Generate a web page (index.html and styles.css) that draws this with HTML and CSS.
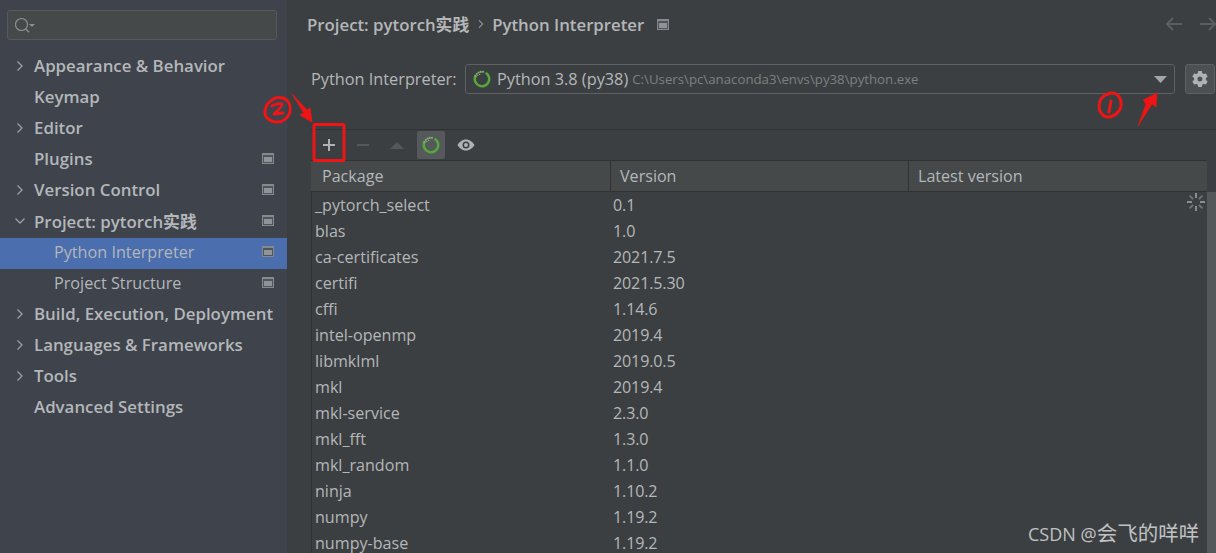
FILE: index.html
```html
<!DOCTYPE html>
<html lang="en">
<head>
<meta charset="utf-8">
<title>Settings</title>
<link rel="stylesheet" href="styles.css">
</head>
<body>
<svg width="0" height="0" class="defs"><defs>
  <symbol id="proj" viewBox="0 0 12 11"><path d="M0 0h12v11H0z" fill="#858a8f"/><path d="M1 2h10v8H1z" fill="#50555b"/><path d="M2 4h8v5H2z" fill="#8f9498"/></symbol>
  <symbol id="chev" viewBox="0 0 10 12"><path d="M2.500 1.500 7 6l-4.500 4.500" fill="none" stroke="currentColor" stroke-width="1.300"/></symbol>
  <symbol id="ring" viewBox="0 0 18 18"><circle cx="9" cy="9" r="7.200" fill="none" stroke="#57a83b" stroke-width="2.500" stroke-dasharray="34 12" transform="rotate(-60 9 9)"/><g fill="#7fae6e"><circle cx="2.500" cy="6" r="1.100"/><circle cx="3.800" cy="4" r="1.100"/><circle cx="5.600" cy="2.600" r="1.100"/><circle cx="7.700" cy="1.900" r="1.100"/><circle cx="10" cy="1.800" r="1.100"/><circle cx="4.800" cy="5.600" r=".7"/><circle cx="6.600" cy="4.400" r=".7"/></g></symbol>
</defs></svg>
<div class="app">
  <aside class="side">
    <div class="search">
      <svg class="search-ico" width="22" height="18" viewBox="0 0 22 18"><circle cx="6.500" cy="7.500" r="6" fill="none" stroke="#8c9093" stroke-width="1.200"/><path d="m10.800 12 3.200 3.200" stroke="#8c9093" stroke-width="1.400"/><path d="M14 7h6l-3 3z" fill="#8c9093"/></svg>
    </div>
    <nav class="tree">
      <div class="row b"><svg class="chev"><use href="#chev"/></svg><span>Appearance &amp; Behavior</span></div>
      <div class="row b"><i class="nochev"></i><span>Keymap</span></div>
      <div class="row b"><svg class="chev"><use href="#chev"/></svg><span>Editor</span></div>
      <div class="row b"><i class="nochev"></i><span>Plugins</span><svg class="proj"><use href="#proj"/></svg></div>
      <div class="row b"><svg class="chev"><use href="#chev"/></svg><span>Version Control</span><svg class="proj"><use href="#proj"/></svg></div>
      <div class="row b"><svg class="chev open"><use href="#chev"/></svg><span>Project: pytorch实践</span><svg class="proj"><use href="#proj"/></svg></div>
      <div class="row sub sel"><span>Python Interpreter</span><svg class="proj"><use href="#proj"/></svg></div>
      <div class="row sub"><span>Project Structure</span><svg class="proj"><use href="#proj"/></svg></div>
      <div class="row b"><svg class="chev"><use href="#chev"/></svg><span>Build, Execution, Deployment</span></div>
      <div class="row b"><svg class="chev"><use href="#chev"/></svg><span>Languages &amp; Frameworks</span></div>
      <div class="row b"><svg class="chev"><use href="#chev"/></svg><span>Tools</span></div>
      <div class="row b"><i class="nochev"></i><span>Advanced Settings</span></div>
    </nav>
  </aside>
  <main class="main">
    <header class="crumbs">
      <span>Project: pytorch实践</span>
      <svg class="crumb-sep"><use href="#chev"/></svg>
      <span>Python Interpreter</span>
      <svg class="proj crumb-proj"><use href="#proj"/></svg>
      <div class="nav-arrows">
        <svg width="18" height="14" viewBox="0 0 18 14"><path d="M17 7H2M8 1 2 7l6 6" fill="none" stroke="#5b5f61" stroke-width="2"/></svg>
        <svg width="18" height="14" viewBox="0 0 18 14"><path d="M1 7h15M10 1l6 6-6 6" fill="none" stroke="#5b5f61" stroke-width="2"/></svg>
      </div>
    </header>
    <div class="interp">
      <label>Python Interpreter:</label>
      <div class="combo">
        <svg class="ring"><use href="#ring"/></svg>
        <span class="combo-name">Python 3.8 (py38)</span>
        <span class="combo-path">C:\Users\pc\anaconda3\envs\py38\python.exe</span>
        <svg class="combo-arrow" width="13" height="7" viewBox="0 0 13 7"><path d="M0 0h13L6.500 7z" fill="#a3a6a8"/></svg>
      </div>
      <button class="gear" aria-label="Settings">
        <svg width="18" height="18" viewBox="0 0 18 18"><path fill-rule="evenodd" fill="#afb1b3" d="M7.200 1h3.600l.5 2.300 1.300.8 2.300-.7 1.800 3.100-1.800 1.600v1.800l1.800 1.600-1.800 3.100-2.300-.7-1.300.8-.5 2.300H7.200l-.5-2.300-1.300-.8-2.300.7-1.800-3.100 1.800-1.600V8.100L1.300 6.500l1.800-3.100 2.300.7 1.300-.8zM9 6.500a2.500 2.500 0 1 0 0 5 2.500 2.500 0 0 0 0-5z"/></svg>
      </button>
    </div>
    <div class="panel">
      <div class="toolbar">
        <svg class="tool" viewBox="0 0 16 16"><path d="M8 2v12M2 8h12" stroke="#afb1b3" stroke-width="2"/></svg>
        <svg class="tool" viewBox="0 0 16 16"><path d="M2 8h12" stroke="#55585a" stroke-width="2"/></svg>
        <svg class="tool" viewBox="0 0 16 16"><path d="M1 12 8 5l7 7z" fill="#55585a"/></svg>
        <span class="tool-on"><svg class="ring"><use href="#ring"/></svg></span>
        <svg class="tool eye" viewBox="0 0 18 14"><path fill-rule="evenodd" fill="#afb1b3" d="M9 1.500c3.800 0 7 2.600 8.500 5.500-1.500 2.900-4.700 5.500-8.500 5.500S2 9.900.5 7C2 4.100 5.200 1.500 9 1.500zM9 3.500a3.500 3.500 0 1 0 0 7 3.500 3.500 0 0 0 0-7z"/><circle cx="9" cy="7" r="2" fill="#afb1b3"/></svg>
      </div>
      <div class="tbl-head">
        <div class="th c1">Package</div>
        <div class="th c2">Version</div>
        <div class="th c3">Latest version</div>
      </div>
      <div class="tbl-wrap">
        <div class="tbl-body">
          <div class="tr"><span class="c1">_pytorch_select</span><span class="c2">0.1</span></div>
          <div class="tr"><span class="c1">blas</span><span class="c2">1.0</span></div>
          <div class="tr"><span class="c1">ca-certificates</span><span class="c2">2021.7.5</span></div>
          <div class="tr"><span class="c1">certifi</span><span class="c2">2021.5.30</span></div>
          <div class="tr"><span class="c1">cffi</span><span class="c2">1.14.6</span></div>
          <div class="tr"><span class="c1">intel-openmp</span><span class="c2">2019.4</span></div>
          <div class="tr"><span class="c1">libmklml</span><span class="c2">2019.0.5</span></div>
          <div class="tr"><span class="c1">mkl</span><span class="c2">2019.4</span></div>
          <div class="tr"><span class="c1">mkl-service</span><span class="c2">2.3.0</span></div>
          <div class="tr"><span class="c1">mkl_fft</span><span class="c2">1.3.0</span></div>
          <div class="tr"><span class="c1">mkl_random</span><span class="c2">1.1.0</span></div>
          <div class="tr"><span class="c1">ninja</span><span class="c2">1.10.2</span></div>
          <div class="tr"><span class="c1">numpy</span><span class="c2">1.19.2</span></div>
          <div class="tr"><span class="c1">numpy-base</span><span class="c2">1.19.2</span></div>
        </div>
        <div class="scroll"></div>
      </div>
    </div>
  </main>
</div>
<svg class="spinner" width="18" height="18" viewBox="0 0 18 18"><g stroke="#8a8d8f" stroke-width="2"><path d="M9 0v5M9 13v5M0 9h5M13 9h5"/><path d="m2.600 2.600 3.500 3.500M11.900 11.900l3.500 3.500M2.600 15.400l3.500-3.500M11.900 6.100l3.500-3.500" stroke="#6f7274"/></g></svg>
<svg class="marks" width="1216" height="553" viewBox="0 0 1216 553">
  <rect x="314" y="124.500" width="30" height="36" rx="1" fill="none" stroke="#f01414" stroke-width="3"/>
  <path d="M292 94 304 113 300 115 312 122 310 108 307 110z" fill="#f01414" stroke="#f01414" stroke-width=".8" stroke-linejoin="round"/>
  <path d="M1138 126 1146 104 1143 100 1157 93 1156 107 1152 104z" fill="#f01414" stroke="#f01414" stroke-width=".6" stroke-linejoin="round"/>
  <path d="M272 100c-5 3-8 9-7 14 1 5 7 8 12 8 6 0 11-4 13-10 1-6-1-12-7-14-4-1-8-1-11 2z" fill="none" stroke="#f01414" stroke-width="3" stroke-linejoin="round"/>
  <path d="M272 106c3-2 8-3 10-2 1 2-5 7-8 10 3 0 6-1 9-1" fill="none" stroke="#f01414" stroke-width="2.800" stroke-linecap="round" stroke-linejoin="round"/>
  <path d="M1108 94c-5 1-9 6-9 12 0 6 4 11 9 11 6 0 12-5 13-11 1-7-3-13-9-13-2 0-3 0-4 1z" fill="none" stroke="#f01414" stroke-width="3"/>
  <path d="M1111 101l-2 11" fill="none" stroke="#f01414" stroke-width="3" stroke-linecap="round"/>
</svg>
<div class="watermark">CSDN @<span class="wm-cjk">会飞的咩咩</span></div>
</body>
</html>
```
FILE: styles.css
```css
* { box-sizing: border-box; }
html, body { margin: 0; padding: 0; width: 1216px; height: 553px; overflow: hidden; }
body { background: #3c3f41; color: #b4b7b9; font-family: "Open Sans", "Noto Sans CJK SC", sans-serif; font-size: 16px; position: relative; }
.defs { position: absolute; }
.app { display: flex; height: 553px; }

.side { width: 287px; flex: none; background: #3e434c; padding-top: 10px; }
.search { margin: 0 10px 0 7px; height: 30px; border: 1px solid #565a5e; border-radius: 3px; background: #45494a; padding: 6px 0 0 7px; }
.search-ico { display: block; }
.tree { margin-top: 12px; }
.row { height: 31px; display: flex; align-items: center; padding: 0 13px 4px 15px; }
.row span { flex: 1; white-space: nowrap; }
.row.b { font-weight: 600; font-size: 16.850px; }
.row.sub { padding-left: 54px; font-size: 16.200px; }
.row.sel { background: #4b6eaf; }
.chev { width: 10px; height: 12px; color: #9da0a2; margin-right: 9px; flex: none; }
.chev.open { transform: rotate(90deg); }
.nochev { width: 10px; margin-right: 9px; flex: none; }
.proj { width: 12px; height: 11px; flex: none; }

.main { flex: 1; min-width: 0; padding-left: 20px; }
.crumbs { height: 50px; display: flex; align-items: center; font-weight: 600; font-size: 16.800px; padding-bottom: 2px; }
.crumb-sep { width: 8px; height: 10px; color: #9da0a2; margin: 0 7px 0 8px; }
.crumb-proj { margin-left: 13px; }
.nav-arrows { margin-left: auto; display: flex; gap: 16px; margin-right: -1px; }

.interp { display: flex; align-items: center; height: 32px; margin: 13px 0 0 4px; }
.interp label { width: 154px; flex: none; font-size: 16.300px; white-space: nowrap; }
.combo { width: 710px; height: 30px; border: 1px solid #5e6163; border-radius: 3px; display: flex; align-items: center; padding: 0 7px; background: #3c3f41; flex: none; }
.ring { width: 18px; height: 18px; flex: none; }
.combo-name { margin-left: 6px; font-size: 16.300px; white-space: nowrap; }
.combo-path { margin-left: 4px; font-size: 13.250px; color: #7c7f81; white-space: nowrap; }
.combo-arrow { margin-left: auto; margin-right: 0; flex: none; }
.gear { width: 30px; height: 30px; margin-left: 10px; background: #4c5052; border: 1px solid #5e6163; border-radius: 3px; padding: 0; display: flex; align-items: center; justify-content: center; flex: none; }

.panel { margin: 34px 0 0 4px; border-top: 1px solid #323232; }
.toolbar { height: 30px; display: flex; align-items: center; padding-left: 10px; gap: 18px; }
.tool { width: 16px; height: 16px; flex: none; }
.tool-on { width: 28px; height: 28px; margin: 0 -6px; background: #55595b; border-radius: 2px; display: flex; align-items: center; justify-content: center; }
.tool.eye { width: 18px; height: 14px; margin-left: 0; }

.tbl-head { display: flex; height: 32px; background: #45494a; border-top: 1px solid #323232; border-bottom: 1px solid #323232; width: 896px; line-height: 31px; }
.th { font-size: 16.100px; padding-left: 11px; }
.th + .th { border-left: 1px solid #323232; padding-left: 9px; }
.th.c1 { width: 299px; }
.th.c2 { width: 298px; }
.th.c3 { width: 299px; }

.tbl-wrap { display: flex; margin-left: 0; border-left: 1px solid #323232; }
.tbl-body { width: 895px; }
.tr { display: flex; height: 26px; align-items: center; font-size: 16.100px; padding-left: 3px; white-space: nowrap; }
.tr .c1 { width: 298px; }
.tr .c2 { letter-spacing: -0.15px; }
.scroll { width: 9px; height: 361px; background: #55585a; flex: none; }

.spinner { position: absolute; left: 1187px; top: 193px; }
.marks { position: absolute; left: 0; top: 0; pointer-events: none; }
.watermark { position: absolute; left: 1028px; top: 517px; font-size: 18px; color: #c0c2c3; white-space: nowrap; }
.wm-cjk { font-size: 20.500px; }
```
